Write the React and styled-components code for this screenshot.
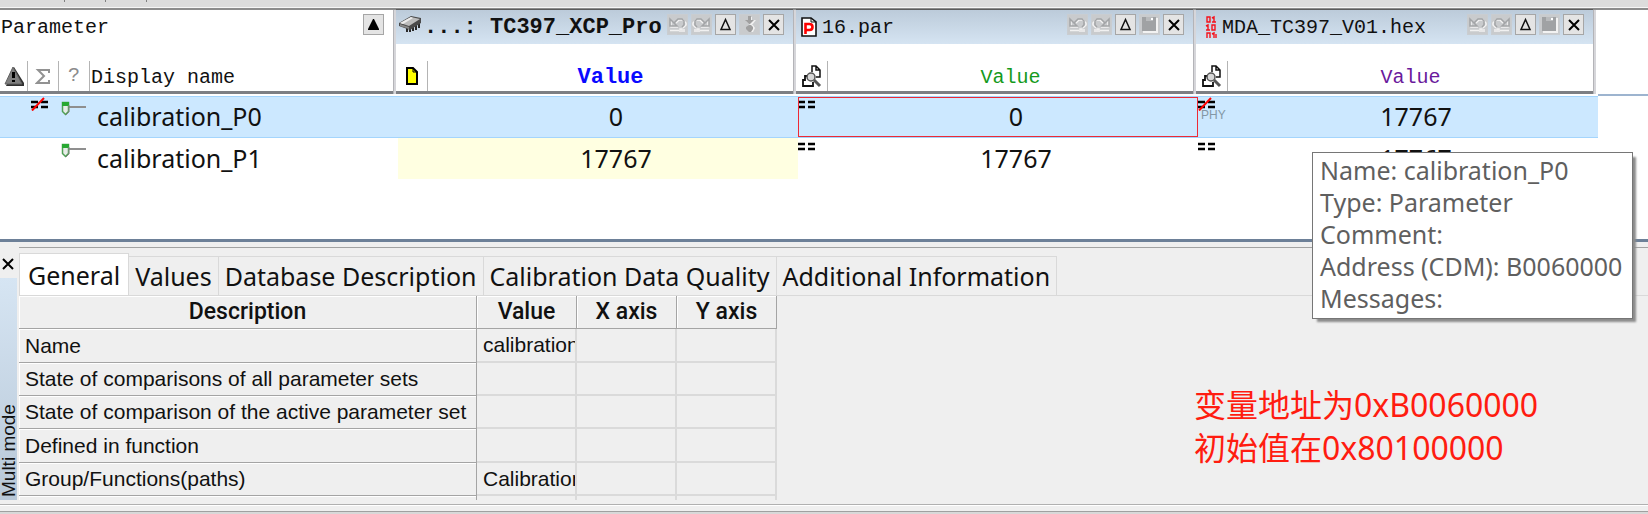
import React, { useState } from "react";
import styled, { createGlobalStyle, css } from "styled-components";

const UI_FONT = '"Noto Sans", "Open Sans", "Noto Sans CJK SC", sans-serif';
const MONO_FONT = '"Liberation Mono", "Noto Sans CJK SC", monospace';
const ARIAL_FONT = '"Liberation Sans", Arial, sans-serif';

const GlobalStyle = createGlobalStyle`
  *, *::before, *::after { box-sizing: border-box; }
  body { margin: 0; background: #efefef; color: #111; font-family: ${UI_FONT}; }
  button { font: inherit; color: inherit; }
`;

const Window = styled.main`
  display: flex;
  flex-direction: column;
  min-height: 100vh;
  overflow: hidden;
`;

const ToolStrip = styled.div`
  display: flex;
  align-items: flex-start;
  gap: 40px;
  height: 10px;
  padding-left: 64px;
  background: linear-gradient(#dcdcdc 7px, #f6f6f6 7px 8px, #8c8c8c 8px);
`;

const StripTick = styled.span`
  width: 1px;
  height: 2px;
  background: #808080;
`;

const ParameterPane = styled.section`
  flex: 1;
  background: #fff;
`;

const ParameterGrid = styled.table`
  width: 100%;
  table-layout: fixed;
  border-collapse: collapse;
  th, td { padding: 0; font-weight: normal; text-align: left; vertical-align: top; }
  thead tr { height: 86px; }
`;

const Col = styled.col`
  width: ${(p) => (p.$size ? `${p.$size}px` : "auto")};
`;

const HeadBox = styled.div`
  height: 84px;
  margin: 0 5px 0 ${(p) => (p.$first ? "0" : "-2px")};
  border-bottom: 3px solid #7d7f84;
  box-shadow: 1px 0 #b4b4b8, 3px 0 #d6d6da;
  font-family: ${MONO_FONT};
  font-size: 20px;
`;

const TitleBar = styled.div`
  display: flex;
  align-items: flex-start;
  gap: 3px;
  height: 34px;
  padding: 4px 9px 0 3px;
  line-height: 28px;
  ${(p) =>
    p.$plain
      ? css`padding-left: 1px;`
      : css`
          background: linear-gradient(#bccbda, #d5e4f2);
          box-shadow: 0 -1px #5c5c5c;
        `}
`;

const Title = styled.span`
  flex: 1;
  min-width: 0;
  overflow: hidden;
  white-space: nowrap;
  font-weight: ${(p) => (p.$bold ? "bold" : "normal")};
  font-size: ${(p) => (p.$bold ? "22px" : "20px")};
`;

const SubHead = styled.div`
  display: flex;
  height: 47px;
  padding-top: 17px;
  line-height: 34px;
`;

const IconSlot = styled.span`
  display: flex;
  align-items: center;
  justify-content: center;
  flex: none;
  width: ${(p) => p.$size || 31}px;
  border-right: 1px solid #b4b4b4;
  color: #8c8c8c;
`;

const NameHead = styled.span`
  padding-left: 1px;
`;

const ValueHead = styled.span`
  flex: 1;
  text-align: center;
  color: ${(p) => p.$color};
  font-weight: ${(p) => (p.$bold ? "bold" : "normal")};
  font-size: ${(p) => (p.$bold ? "22px" : "20px")};
`;

const SmallButton = styled.button`
  display: flex;
  align-items: center;
  justify-content: center;
  flex: none;
  width: 21px;
  height: 21px;
  padding: 0;
  border: 1px solid ${(p) => (p.disabled ? "#c9cdd1" : "#a6a6a6")};
  background: ${(p) => (p.disabled ? "#c9cbcd" : "#e4e4e4")};
`;

const FillerHead = styled.th`
  background: linear-gradient(#fff 84px, #9db4cf 84px);
`;

const Row = styled.tr`
  height: ${(p) => (p.$selected ? "42px" : "41px")};
  ${(p) =>
    p.$selected &&
    css`
      td:not(:last-child) {
        background: #cce8ff;
        box-shadow: inset 0 1px #a4d5fd, inset 0 -1px #a4d5fd;
      }
    `}
`;

const NameCell = styled.div`
  display: flex;
  align-items: flex-start;
  height: 41px;
  font-size: 25px;
  line-height: 41px;
`;

const StateSlot = styled.span`
  display: flex;
  justify-content: flex-end;
  width: 48px;
  padding-top: 1px;
`;

const KindSlot = styled.span`
  display: flex;
  width: 49px;
  padding: 5px 0 0 13px;
`;

const ValueTd = styled.td`
  position: relative;
  ${(p) => p.$modified && css`background: #ffffe1;`}
`;

const ValueBox = styled.div`
  display: flex;
  height: 41px;
  font-size: 25px;
  line-height: 41px;
  ${(p) =>
    p.$active &&
    css`
      height: 40px;
      margin: 1px 0;
      line-height: 39px;
      outline: 1px solid #ee2a35;
      outline-offset: -1px;
    `}
`;

const CompareSlot = styled.span`
  display: flex;
  flex-direction: column;
  flex: none;
  width: 36px;
  padding-top: ${(p) => (p.$active ? "0" : "1px")};
  line-height: 10px;
`;

const PhyTag = styled.span`
  padding-left: 3px;
  font-family: ${ARIAL_FONT};
  font-size: 12px;
  line-height: 8px;
  color: #8397a5;
`;

const Value = styled.span`
  flex: 1;
  text-align: center;
`;

const Tooltip = styled.div`
  position: absolute;
  z-index: 2;
  top: 14px;
  left: 114px;
  padding: 1px 10px 4px 7px;
  border: 1px solid #767676;
  background: #fff;
  box-shadow: 4px 4px 2px -1px #8c8c8c;
  color: #5f5f5f;
  font-size: 25px;
  line-height: 32px;
  white-space: nowrap;
`;

const DetailPane = styled.section`
  display: flex;
  height: 266px;
  border-top: 3px solid #6d8098;
  border-bottom: 1px solid #b0b0b0;
`;

const Side = styled.div`
  display: flex;
  flex-direction: column;
  flex: none;
  width: 17px;
  margin: 5px 2px 4px 0;
`;

const CloseButton = styled.button`
  display: flex;
  align-items: center;
  justify-content: flex-start;
  height: 31px;
  padding: 2px 0 0 1px;
  border: 0;
  background: none;
`;

const ModeBar = styled.div`
  flex: 1;
  padding-top: 3px;
  background: linear-gradient(#b8c8d8, #d6e5f3);
  writing-mode: vertical-rl;
  transform: rotate(180deg);
  font-family: ${ARIAL_FONT};
  font-size: 19px;
  line-height: 17px;
  white-space: nowrap;
`;

const DetailMain = styled.div`
  display: flex;
  flex-direction: column;
  flex: 1;
  min-width: 0;
  margin-top: 5px;
  border-top: 1px solid #a2a2a2;
`;

const TabList = styled.div`
  display: flex;
  align-items: flex-end;
  height: 48px;
  border-bottom: 1px solid #d9d9d9;
`;

const Tab = styled.button`
  height: ${(p) => (p.$active ? "42px" : "39px")};
  padding: 0 ${(p) => (p.$active ? "8px" : "6px")};
  border: 1px solid #d9d9d9;
  border-left-width: ${(p) => (p.$active ? "1px" : "0")};
  border-bottom: 0;
  background: ${(p) => (p.$active ? "#fff" : "#efefef")};
  font-size: 25px;
  line-height: 36px;
  white-space: nowrap;
`;

const DetailBody = styled.div`
  display: flex;
  flex: 1;
  min-height: 0;
  margin-bottom: 4px;
  overflow: hidden;
`;

const DetailGrid = styled.table`
  flex: none;
  width: 758px;
  height: max-content;
  table-layout: fixed;
  border-collapse: separate;
  border-spacing: 0;
  font-family: ${ARIAL_FONT};
  font-size: 21px;
  line-height: 30px;
  tr { height: 33px; }
  tbody tr:nth-child(3n + 1) { height: 34px; }
  th, td { padding: 0 0 0 6px; overflow: hidden; white-space: nowrap; text-align: left; font-weight: normal; }
  td { border: solid #dadada; border-width: 0 2px 2px 0; }
  th { border: solid #a4a4a4; border-width: 0 1px 1px 0; box-shadow: inset 1px 1px #fff; }
  thead th { padding: 0; text-align: center; font-family: Roboto, sans-serif; font-weight: 500; font-size: 23px; }
`;

const Note = styled.p`
  margin: 87px 0 0 417px;
  color: #ff1c10;
  font-size: 32px;
  line-height: 43px;
  white-space: nowrap;
`;

const StatusEdge = styled.footer`
  height: 9px;
  border-top: 1px solid #fff;
  border-bottom: 2px solid #d8d8d8;
  box-shadow: inset 0 -1px #a0a0a0;
`;

const UndoIcon = ({ flip }) => (
  <svg width="19" height="19" viewBox="0 0 19 19" fill="none" aria-hidden="true">
    <g transform={flip ? "translate(19 0) scale(-1 1)" : undefined}>
      <path d="M3 5v7h7M8 8l3-3h4l3 3v2l-3 3" stroke="#f3f3f3" strokeWidth="1.5" />
      <path d="M2 4v7h7zM6 8l4-4h4l2 2v4l-2 2" stroke="#a3a5a7" strokeWidth="1.5" />
      <path d="M2 15.5h9M12 17v-3h2v3M16 17v-3" stroke="#f1f1f1" strokeWidth="1.5" />
    </g>
  </svg>
);

const DeltaIcon = () => (
  <svg width="19" height="19" viewBox="0 0 19 19" aria-hidden="true">
    <path d="M9.5 4.5 L14 14.5 H5 Z" fill="none" stroke="#111" strokeWidth="1.5" />
  </svg>
);

const UpIcon = () => (
  <svg width="19" height="19" viewBox="0 0 19 19" aria-hidden="true">
    <path d="M9 4h1l5 10v1H4v-1z" fill="#000" />
  </svg>
);

const TransferIcon = () => (
  <svg width="19" height="19" viewBox="0 0 19 19" aria-hidden="true">
    <path d="M9 2h3v3h4l-4 5h1l2 3-2 4h-3l-2-4 2-3-4-4h3z" fill="#f0f0f0" />
    <path d="M8 1h3v4h3l-4 4h-1L5 5h3zM9 10h2l2 2v2l-2 3H9l-3-3v-2z" fill="#a0a0a0" />
  </svg>
);

const SaveIcon = () => (
  <svg width="19" height="19" viewBox="0 0 19 19" shapeRendering="crispEdges" aria-hidden="true">
    <path d="M3 3h15v15H3z" fill="#f2f2f2" />
    <path d="M2 2h14v14H2z" fill="#a0a2a4" />
    <path d="M6 2h7v4H6z" fill="#b9bbbd" />
    <path d="M11 3h2v2h-2z" fill="#fff" />
  </svg>
);

const CrossIcon = () => (
  <svg width="14" height="14" viewBox="0 0 14 14" aria-hidden="true">
    <path d="M2 2l10 10M12 2L2 12" stroke="#000" strokeWidth="2" />
  </svg>
);

const ChipIcon = () => (
  <svg width="22" height="20" viewBox="0 0 22 20" aria-hidden="true">
    <path d="M11 15v3M14 13v4M17 11v5M20 9v5M8 14v4" stroke="#2a2a2a" strokeWidth="2" />
    <path d="M0 9 12 2l10 2v5l-11 7L0 12z" fill="#4a4a4a" />
    <path d="M1 9 12 3l9 2-11 7z" fill="#bcbcbc" />
    <path d="M1 9 12 3l2 1L4 10z" fill="#ececec" />
    <path d="M1 10l9 3v2l-9-3z" fill="#888" />
  </svg>
);

const ParIcon = () => (
  <svg width="20" height="24" viewBox="0 0 20 24" aria-hidden="true">
    <path d="M3 4h9l5 4v14H3z" fill="#fff" stroke="#111" strokeWidth="1.6" />
    <path d="M12 4v4h5" fill="none" stroke="#111" strokeWidth="1" />
    <path d="M6.5 20V10h4q3 0 3 3t-3 3h-4" fill="none" stroke="#f00" strokeWidth="2.6" />
  </svg>
);

const HexIcon = () => (
  <svg width="20" height="24" viewBox="0 0 20 24" fill="none" stroke="#f5121c" strokeWidth="1.4" aria-hidden="true">
    <path d="M8 3h3v5H8zM13 8h4M15 8V3l-2 1M7 16h4M9 16v-5l-2 1M13 11h3v5h-3zM8 24v-5h3v5M13 20l2-1v5M17 24v-4" />
  </svg>
);

const PageIcon = () => (
  <svg width="12" height="18" viewBox="0 0 12 18" aria-hidden="true">
    <path d="M1 1h6l4 4v12H1z" fill="#ff0" stroke="#000" strokeWidth="2" />
    <path d="M7 2v3h3" fill="none" stroke="#000" />
  </svg>
);

const InspectIcon = () => (
  <svg width="22" height="23" viewBox="0 0 22 23" fill="none" aria-hidden="true">
    <path d="M11 7V1h4l4 4v7h-4M15 1v4h4" stroke="#111" strokeWidth="1.5" />
    <path d="M6 11H4v4H2v6h10v-4" stroke="#111" strokeWidth="1.8" />
    <path d="M13 15l6 6" stroke="#555" strokeWidth="3" />
    <circle cx="10" cy="12" r="4" fill="#d8d8d8" stroke="#555" strokeWidth="1.5" />
  </svg>
);

const WarningIcon = () => (
  <svg width="20" height="21" viewBox="0 0 20 21" aria-hidden="true">
    <path d="M10 1 20 17v3H2z" fill="#303030" />
    <path d="M9 1 18 18H1z" fill="#808080" stroke="#606060" />
    <path d="M9.5 6v6M9.5 14v2" stroke="#000" strokeWidth="3" />
  </svg>
);

const SigmaIcon = () => (
  <svg width="16" height="17" viewBox="0 0 16 17" aria-hidden="true">
    <path d="M14 5V2H3l6 6-7 7h12v-3" fill="none" stroke="#929292" strokeWidth="2" />
  </svg>
);

const CompareIcon = ({ differs }) => (
  <svg width="17" height="14" viewBox="0 0 17 14" aria-hidden="true">
    <path d="M0 5h7M10 5h7M0 10h7M10 10h7" stroke="#000" strokeWidth="2.6" />
    {differs && <path d="M1 13.5 13 1" stroke="#f00" strokeWidth="2" />}
  </svg>
);

const ScalarIcon = () => (
  <svg width="26" height="16" viewBox="0 0 26 16" aria-hidden="true">
    <path d="M7 6h18" stroke="#8f8f8f" strokeWidth="2" />
    <path d="M1.5 1.5h6v9l-3 3-3-3z" fill="#e8ece8" stroke="#4f9f55" strokeWidth="1.5" />
    <path d="M1 1h7v4H1z" fill="#28a832" />
    <path d="M3 5h3v5H3z" fill="#e8ece8" />
    <path d="M8 4v7l-3 3" fill="none" stroke="#888" />
  </svg>
);

const SETS = [
  { title: "...: TC397_XCP_Pro", icon: <ChipIcon />, state: <PageIcon />, bold: true, color: "#0a0aff", store: <TransferIcon />, storeLabel: "Transfer" },
  { title: "16.par", icon: <ParIcon />, state: <InspectIcon />, color: "#159a1c", store: <SaveIcon />, storeLabel: "Save" },
  { title: "MDA_TC397_V01.hex", icon: <HexIcon />, state: <InspectIcon />, color: "#6a1a9c", store: <SaveIcon />, storeLabel: "Save" },
];

const TABS = ["General", "Values", "Database Description", "Calibration Data Quality", "Additional Information"];

const DETAILS = [
  ["Name", "calibration_P0"],
  ["State of comparisons of all parameter sets", ""],
  ["State of comparison of the active parameter set", ""],
  ["Defined in function", ""],
  ["Group/Functions(paths)", "Calibration"],
  ["", ""],
];

function SetHeader({ set }) {
  return (
    <th scope="col">
      <HeadBox>
        <TitleBar>
          {set.icon}
          <Title $bold={set.bold}>{set.title}</Title>
          <SmallButton disabled aria-label="Undo"><UndoIcon /></SmallButton>
          <SmallButton disabled aria-label="Redo"><UndoIcon flip /></SmallButton>
          <SmallButton aria-label="Differences"><DeltaIcon /></SmallButton>
          <SmallButton disabled aria-label={set.storeLabel}>{set.store}</SmallButton>
          <SmallButton aria-label="Close set"><CrossIcon /></SmallButton>
        </TitleBar>
        <SubHead>
          <IconSlot $size={32}>{set.state}</IconSlot>
          <ValueHead $color={set.color} $bold={set.bold}>Value</ValueHead>
        </SubHead>
      </HeadBox>
    </th>
  );
}

function ParameterName({ name, differs }) {
  return (
    <td>
      <NameCell>
        <StateSlot>{differs && <CompareIcon differs />}</StateSlot>
        <KindSlot><ScalarIcon /></KindSlot>
        {name}
      </NameCell>
    </td>
  );
}

function ValueCell({ value, compare, phy, active, modified, children }) {
  return (
    <ValueTd $modified={modified}>
      <ValueBox $active={active}>
        <CompareSlot $active={active}>
          {compare && <CompareIcon differs={compare === "differs"} />}
          {phy && <PhyTag>PHY</PhyTag>}
        </CompareSlot>
        <Value>{value}</Value>
      </ValueBox>
      {children}
    </ValueTd>
  );
}

export default function App() {
  const [tab, setTab] = useState(TABS[0]);
  return (
    <>
      <GlobalStyle />
      <Window>
        <ToolStrip><StripTick /><StripTick /><StripTick /></ToolStrip>
        <ParameterPane>
          <ParameterGrid>
            <colgroup>
              <Col $size={398} /><Col $size={400} /><Col $size={400} /><Col $size={400} /><Col />
            </colgroup>
            <thead>
              <tr>
                <th scope="col">
                  <HeadBox $first>
                    <TitleBar $plain>
                      <Title>Parameter</Title>
                      <SmallButton aria-label="Collapse header"><UpIcon /></SmallButton>
                    </TitleBar>
                    <SubHead>
                      <IconSlot $size={28}><WarningIcon /></IconSlot>
                      <IconSlot><SigmaIcon /></IconSlot>
                      <IconSlot>?</IconSlot>
                      <NameHead>Display name</NameHead>
                    </SubHead>
                  </HeadBox>
                </th>
                {SETS.map((s) => <SetHeader key={s.title} set={s} />)}
                <FillerHead />
              </tr>
            </thead>
            <tbody>
              <Row $selected>
                <ParameterName name="calibration_P0" differs />
                <ValueCell value="0" />
                <ValueCell value="0" compare="equal" active />
                <ValueCell value="17767" compare="differs" phy />
                <td />
              </Row>
              <Row>
                <ParameterName name="calibration_P1" />
                <ValueCell value="17767" modified />
                <ValueCell value="17767" compare="equal" />
                <ValueCell value="17767" compare="equal">
                  <Tooltip role="tooltip">
                    <div>Name: calibration_P0</div>
                    <div>Type: Parameter</div>
                    <div>Comment:</div>
                    <div>Address (CDM): B0060000</div>
                    <div>Messages:</div>
                  </Tooltip>
                </ValueCell>
                <td />
              </Row>
            </tbody>
          </ParameterGrid>
        </ParameterPane>
        <DetailPane>
          <Side>
            <CloseButton aria-label="Close details"><CrossIcon /></CloseButton>
            <ModeBar>Multi mode</ModeBar>
          </Side>
          <DetailMain>
            <TabList role="tablist">
              {TABS.map((t) => (
                <Tab key={t} role="tab" aria-selected={t === tab} $active={t === tab} onClick={() => setTab(t)}>{t}</Tab>
              ))}
            </TabList>
            <DetailBody>
              <DetailGrid>
                <colgroup>
                  <Col $size={458} /><Col $size={100} /><Col $size={100} /><Col $size={100} />
                </colgroup>
                <thead>
                  <tr>
                    <th scope="col">Description</th>
                    <th scope="col">Value</th>
                    <th scope="col">X axis</th>
                    <th scope="col">Y axis</th>
                  </tr>
                </thead>
                <tbody>
                  {DETAILS.map(([name, value]) => (
                    <tr key={name}>
                      <th scope="row">{name}</th>
                      <td>{value}</td>
                      <td />
                      <td />
                    </tr>
                  ))}
                </tbody>
              </DetailGrid>
              <Note>
                变量地址为0xB0060000
                <br />
                初始值在0x80100000
              </Note>
            </DetailBody>
          </DetailMain>
        </DetailPane>
        <StatusEdge />
      </Window>
    </>
  );
}
